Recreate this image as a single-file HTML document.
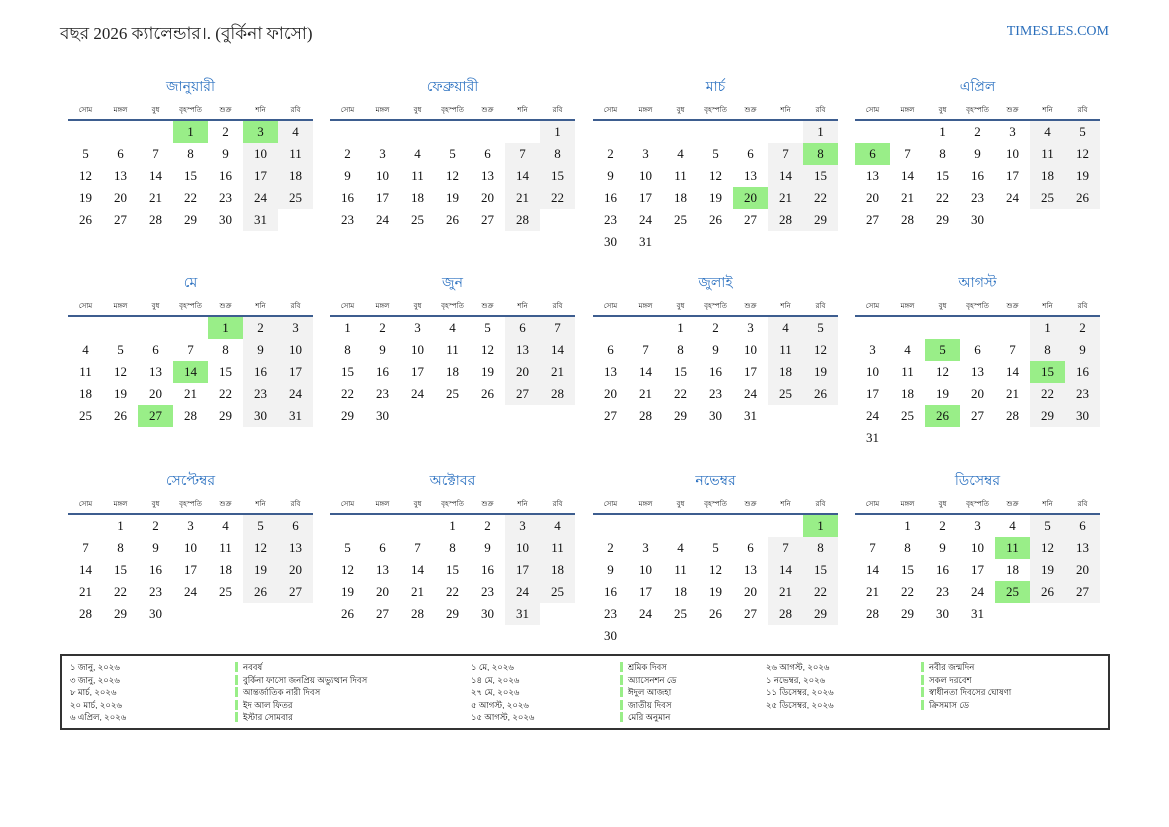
<!DOCTYPE html>
<html><head><meta charset="utf-8"><style>
body{margin:0;width:1169px;height:827px;background:#fff;position:relative;font-family:"Liberation Serif",serif;color:#111;overflow:hidden}
.t{position:absolute;left:60px;top:21px;font-size:17px;color:#222}
.s{position:absolute;right:60px;top:24px;font-size:14px;color:#2a6ebb}
.m{position:absolute;width:245px}
.m h3{margin:0;height:30px;line-height:36px;text-align:center;font-weight:normal;font-size:14px;color:#2a70c0}
table{border-collapse:collapse;table-layout:fixed;width:245px}
th{height:19px;font-size:7px;font-weight:normal;border-bottom:2px solid #3d5d8f;padding:0;vertical-align:middle}
td{height:22px;padding:0;text-align:center;font-size:13px}
td.w{background:#f2f2f2}td.h{background:#99ee88}
.lg{position:absolute;left:60px;top:654px;width:1046px;height:72px;border:2px solid #333;font-size:8.5px;font-family:"Liberation Sans",sans-serif}
.lg div{position:absolute;line-height:12.5px}
.b span{display:block;border-left:3px solid #99ee88;padding-left:5px;height:10px;line-height:10px;margin-bottom:2.5px}
</style></head><body>
<div class="t">বছর 2026 ক্যালেন্ডার।. (বুর্কিনা ফাসো)</div>
<div class="s">TIMESLES.COM</div>

<div class="m" style="left:68px;top:70px"><h3>জানুয়ারী</h3><table><tr><th>সোম</th><th>মঙ্গল</th><th>বুধ</th><th>বৃহস্পতি</th><th>শুক্র</th><th>শনি</th><th>রবি</th></tr>
<tr><td></td><td></td><td></td><td class="h">1</td><td>2</td><td class="h">3</td><td class="w">4</td></tr>
<tr><td>5</td><td>6</td><td>7</td><td>8</td><td>9</td><td class="w">10</td><td class="w">11</td></tr>
<tr><td>12</td><td>13</td><td>14</td><td>15</td><td>16</td><td class="w">17</td><td class="w">18</td></tr>
<tr><td>19</td><td>20</td><td>21</td><td>22</td><td>23</td><td class="w">24</td><td class="w">25</td></tr>
<tr><td>26</td><td>27</td><td>28</td><td>29</td><td>30</td><td class="w">31</td><td></td></tr></table></div>

<div class="m" style="left:330px;top:70px"><h3>ফেব্রুয়ারী</h3><table><tr><th>সোম</th><th>মঙ্গল</th><th>বুধ</th><th>বৃহস্পতি</th><th>শুক্র</th><th>শনি</th><th>রবি</th></tr>
<tr><td></td><td></td><td></td><td></td><td></td><td></td><td class="w">1</td></tr>
<tr><td>2</td><td>3</td><td>4</td><td>5</td><td>6</td><td class="w">7</td><td class="w">8</td></tr>
<tr><td>9</td><td>10</td><td>11</td><td>12</td><td>13</td><td class="w">14</td><td class="w">15</td></tr>
<tr><td>16</td><td>17</td><td>18</td><td>19</td><td>20</td><td class="w">21</td><td class="w">22</td></tr>
<tr><td>23</td><td>24</td><td>25</td><td>26</td><td>27</td><td class="w">28</td><td></td></tr></table></div>

<div class="m" style="left:593px;top:70px"><h3>মার্চ</h3><table><tr><th>সোম</th><th>মঙ্গল</th><th>বুধ</th><th>বৃহস্পতি</th><th>শুক্র</th><th>শনি</th><th>রবি</th></tr>
<tr><td></td><td></td><td></td><td></td><td></td><td></td><td class="w">1</td></tr>
<tr><td>2</td><td>3</td><td>4</td><td>5</td><td>6</td><td class="w">7</td><td class="h">8</td></tr>
<tr><td>9</td><td>10</td><td>11</td><td>12</td><td>13</td><td class="w">14</td><td class="w">15</td></tr>
<tr><td>16</td><td>17</td><td>18</td><td>19</td><td class="h">20</td><td class="w">21</td><td class="w">22</td></tr>
<tr><td>23</td><td>24</td><td>25</td><td>26</td><td>27</td><td class="w">28</td><td class="w">29</td></tr>
<tr><td>30</td><td>31</td><td></td><td></td><td></td><td></td><td></td></tr></table></div>

<div class="m" style="left:855px;top:70px"><h3>এপ্রিল</h3><table><tr><th>সোম</th><th>মঙ্গল</th><th>বুধ</th><th>বৃহস্পতি</th><th>শুক্র</th><th>শনি</th><th>রবি</th></tr>
<tr><td></td><td></td><td>1</td><td>2</td><td>3</td><td class="w">4</td><td class="w">5</td></tr>
<tr><td class="h">6</td><td>7</td><td>8</td><td>9</td><td>10</td><td class="w">11</td><td class="w">12</td></tr>
<tr><td>13</td><td>14</td><td>15</td><td>16</td><td>17</td><td class="w">18</td><td class="w">19</td></tr>
<tr><td>20</td><td>21</td><td>22</td><td>23</td><td>24</td><td class="w">25</td><td class="w">26</td></tr>
<tr><td>27</td><td>28</td><td>29</td><td>30</td><td></td><td></td><td></td></tr></table></div>

<div class="m" style="left:68px;top:266px"><h3>মে</h3><table><tr><th>সোম</th><th>মঙ্গল</th><th>বুধ</th><th>বৃহস্পতি</th><th>শুক্র</th><th>শনি</th><th>রবি</th></tr>
<tr><td></td><td></td><td></td><td></td><td class="h">1</td><td class="w">2</td><td class="w">3</td></tr>
<tr><td>4</td><td>5</td><td>6</td><td>7</td><td>8</td><td class="w">9</td><td class="w">10</td></tr>
<tr><td>11</td><td>12</td><td>13</td><td class="h">14</td><td>15</td><td class="w">16</td><td class="w">17</td></tr>
<tr><td>18</td><td>19</td><td>20</td><td>21</td><td>22</td><td class="w">23</td><td class="w">24</td></tr>
<tr><td>25</td><td>26</td><td class="h">27</td><td>28</td><td>29</td><td class="w">30</td><td class="w">31</td></tr></table></div>

<div class="m" style="left:330px;top:266px"><h3>জুন</h3><table><tr><th>সোম</th><th>মঙ্গল</th><th>বুধ</th><th>বৃহস্পতি</th><th>শুক্র</th><th>শনি</th><th>রবি</th></tr>
<tr><td>1</td><td>2</td><td>3</td><td>4</td><td>5</td><td class="w">6</td><td class="w">7</td></tr>
<tr><td>8</td><td>9</td><td>10</td><td>11</td><td>12</td><td class="w">13</td><td class="w">14</td></tr>
<tr><td>15</td><td>16</td><td>17</td><td>18</td><td>19</td><td class="w">20</td><td class="w">21</td></tr>
<tr><td>22</td><td>23</td><td>24</td><td>25</td><td>26</td><td class="w">27</td><td class="w">28</td></tr>
<tr><td>29</td><td>30</td><td></td><td></td><td></td><td></td><td></td></tr></table></div>

<div class="m" style="left:593px;top:266px"><h3>জুলাই</h3><table><tr><th>সোম</th><th>মঙ্গল</th><th>বুধ</th><th>বৃহস্পতি</th><th>শুক্র</th><th>শনি</th><th>রবি</th></tr>
<tr><td></td><td></td><td>1</td><td>2</td><td>3</td><td class="w">4</td><td class="w">5</td></tr>
<tr><td>6</td><td>7</td><td>8</td><td>9</td><td>10</td><td class="w">11</td><td class="w">12</td></tr>
<tr><td>13</td><td>14</td><td>15</td><td>16</td><td>17</td><td class="w">18</td><td class="w">19</td></tr>
<tr><td>20</td><td>21</td><td>22</td><td>23</td><td>24</td><td class="w">25</td><td class="w">26</td></tr>
<tr><td>27</td><td>28</td><td>29</td><td>30</td><td>31</td><td></td><td></td></tr></table></div>

<div class="m" style="left:855px;top:266px"><h3>আগস্ট</h3><table><tr><th>সোম</th><th>মঙ্গল</th><th>বুধ</th><th>বৃহস্পতি</th><th>শুক্র</th><th>শনি</th><th>রবি</th></tr>
<tr><td></td><td></td><td></td><td></td><td></td><td class="w">1</td><td class="w">2</td></tr>
<tr><td>3</td><td>4</td><td class="h">5</td><td>6</td><td>7</td><td class="w">8</td><td class="w">9</td></tr>
<tr><td>10</td><td>11</td><td>12</td><td>13</td><td>14</td><td class="h">15</td><td class="w">16</td></tr>
<tr><td>17</td><td>18</td><td>19</td><td>20</td><td>21</td><td class="w">22</td><td class="w">23</td></tr>
<tr><td>24</td><td>25</td><td class="h">26</td><td>27</td><td>28</td><td class="w">29</td><td class="w">30</td></tr>
<tr><td>31</td><td></td><td></td><td></td><td></td><td></td><td></td></tr></table></div>

<div class="m" style="left:68px;top:464px"><h3>সেপ্টেম্বর</h3><table><tr><th>সোম</th><th>মঙ্গল</th><th>বুধ</th><th>বৃহস্পতি</th><th>শুক্র</th><th>শনি</th><th>রবি</th></tr>
<tr><td></td><td>1</td><td>2</td><td>3</td><td>4</td><td class="w">5</td><td class="w">6</td></tr>
<tr><td>7</td><td>8</td><td>9</td><td>10</td><td>11</td><td class="w">12</td><td class="w">13</td></tr>
<tr><td>14</td><td>15</td><td>16</td><td>17</td><td>18</td><td class="w">19</td><td class="w">20</td></tr>
<tr><td>21</td><td>22</td><td>23</td><td>24</td><td>25</td><td class="w">26</td><td class="w">27</td></tr>
<tr><td>28</td><td>29</td><td>30</td><td></td><td></td><td></td><td></td></tr></table></div>

<div class="m" style="left:330px;top:464px"><h3>অক্টোবর</h3><table><tr><th>সোম</th><th>মঙ্গল</th><th>বুধ</th><th>বৃহস্পতি</th><th>শুক্র</th><th>শনি</th><th>রবি</th></tr>
<tr><td></td><td></td><td></td><td>1</td><td>2</td><td class="w">3</td><td class="w">4</td></tr>
<tr><td>5</td><td>6</td><td>7</td><td>8</td><td>9</td><td class="w">10</td><td class="w">11</td></tr>
<tr><td>12</td><td>13</td><td>14</td><td>15</td><td>16</td><td class="w">17</td><td class="w">18</td></tr>
<tr><td>19</td><td>20</td><td>21</td><td>22</td><td>23</td><td class="w">24</td><td class="w">25</td></tr>
<tr><td>26</td><td>27</td><td>28</td><td>29</td><td>30</td><td class="w">31</td><td></td></tr></table></div>

<div class="m" style="left:593px;top:464px"><h3>নভেম্বর</h3><table><tr><th>সোম</th><th>মঙ্গল</th><th>বুধ</th><th>বৃহস্পতি</th><th>শুক্র</th><th>শনি</th><th>রবি</th></tr>
<tr><td></td><td></td><td></td><td></td><td></td><td></td><td class="h">1</td></tr>
<tr><td>2</td><td>3</td><td>4</td><td>5</td><td>6</td><td class="w">7</td><td class="w">8</td></tr>
<tr><td>9</td><td>10</td><td>11</td><td>12</td><td>13</td><td class="w">14</td><td class="w">15</td></tr>
<tr><td>16</td><td>17</td><td>18</td><td>19</td><td>20</td><td class="w">21</td><td class="w">22</td></tr>
<tr><td>23</td><td>24</td><td>25</td><td>26</td><td>27</td><td class="w">28</td><td class="w">29</td></tr>
<tr><td>30</td><td></td><td></td><td></td><td></td><td></td><td></td></tr></table></div>

<div class="m" style="left:855px;top:464px"><h3>ডিসেম্বর</h3><table><tr><th>সোম</th><th>মঙ্গল</th><th>বুধ</th><th>বৃহস্পতি</th><th>শুক্র</th><th>শনি</th><th>রবি</th></tr>
<tr><td></td><td>1</td><td>2</td><td>3</td><td>4</td><td class="w">5</td><td class="w">6</td></tr>
<tr><td>7</td><td>8</td><td>9</td><td>10</td><td class="h">11</td><td class="w">12</td><td class="w">13</td></tr>
<tr><td>14</td><td>15</td><td>16</td><td>17</td><td>18</td><td class="w">19</td><td class="w">20</td></tr>
<tr><td>21</td><td>22</td><td>23</td><td>24</td><td class="h">25</td><td class="w">26</td><td class="w">27</td></tr>
<tr><td>28</td><td>29</td><td>30</td><td>31</td><td></td><td></td><td></td></tr></table></div>

<div class="lg">
<div style="left:8px;top:5px">১ জানু, ২০২৬<br>৩ জানু, ২০২৬<br>৮ মার্চ, ২০২৬<br>২০ মার্চ, ২০২৬<br>৬ এপ্রিল, ২০২৬</div>
<div class="b" style="left:173px;top:6px"><span>নববর্ষ</span><span>বুর্কিনা ফাসো জনপ্রিয় অভ্যুত্থান দিবস</span><span>আন্তর্জাতিক নারী দিবস</span><span>ইদ আল ফিতর</span><span>ইস্টার সোমবার</span></div>
<div style="left:409px;top:5px">১ মে, ২০২৬<br>১৪ মে, ২০২৬<br>২৭ মে, ২০২৬<br>৫ আগস্ট, ২০২৬<br>১৫ আগস্ট, ২০২৬</div>
<div class="b" style="left:558px;top:6px"><span>শ্রমিক দিবস</span><span>অ্যাসেনশন ডে</span><span>ঈদুল আজহা</span><span>জাতীয় দিবস</span><span>মেরি অনুমান</span></div>
<div style="left:704px;top:5px">২৬ আগস্ট, ২০২৬<br>১ নভেম্বর, ২০২৬<br>১১ ডিসেম্বর, ২০২৬<br>২৫ ডিসেম্বর, ২০২৬</div>
<div class="b" style="left:859px;top:6px"><span>নবীর জন্মদিন</span><span>সকল দরবেশ</span><span>স্বাধীনতা দিবসের ঘোষণা</span><span>ক্রিসমাস ডে</span></div>
</div>
</body></html>
